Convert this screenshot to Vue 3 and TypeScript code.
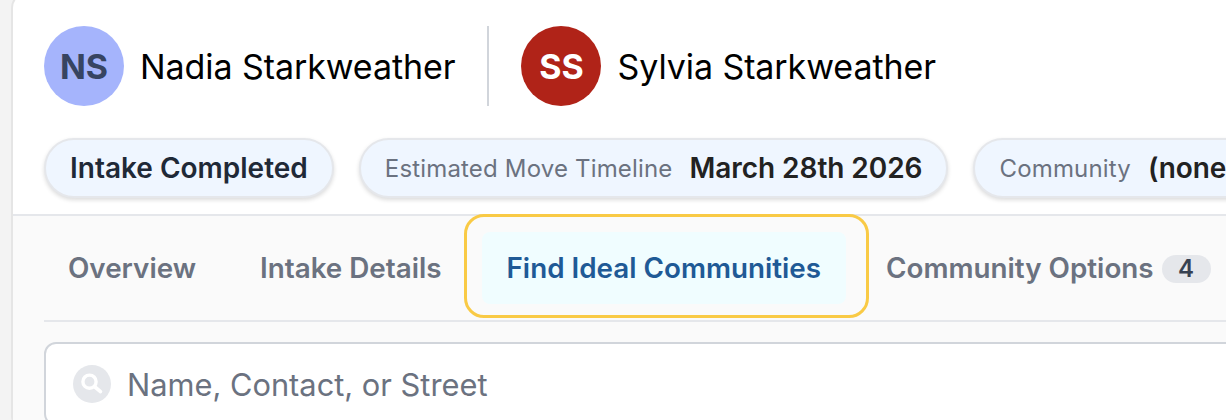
<script setup lang="ts">
type Person = { initials: string; name: string; tone: string }
type Tab = { label: string; count?: number; active?: boolean }

const people: Person[] = [
  { initials: 'NS', name: 'Nadia Starkweather', tone: 'periwinkle' },
  { initials: 'SS', name: 'Sylvia Starkweather', tone: 'brick' }
]
const tabs: Tab[] = [
  { label: 'Overview' },
  { label: 'Intake Details' },
  { label: 'Find Ideal Communities', active: true },
  { label: 'Community Options', count: 4 }
]
</script>

<template>
  <div class="page">
    <section class="card">
      <header class="head">
        <div class="people">
          <div v-for="p in people" :key="p.initials" class="person">
            <span class="avatar" :class="p.tone">{{ p.initials }}</span>
            <span class="name">{{ p.name }}</span>
          </div>
        </div>
        <div class="pills">
          <span class="pill"><b class="status">Intake Completed</b></span>
          <span class="pill">
            <span class="label">Estimated Move Timeline</span>
            <b class="value">March 28th 2026</b>
          </span>
          <span class="pill">
            <span class="label">Community</span>
            <b class="value">(none)</b>
          </span>
        </div>
      </header>
      <div class="body">
        <nav class="tabs">
          <div v-for="t in tabs" :key="t.label" class="tab" :class="{ active: t.active }">
            <span class="tab-inner">
              {{ t.label }}
              <span v-if="t.count" class="count">{{ t.count }}</span>
            </span>
          </div>
        </nav>
        <div class="search">
          <span class="search-icon">
            <svg width="38" height="38" viewBox="0 0 38 38">
              <circle cx="19" cy="19" r="19" fill="#e5e7eb" />
              <circle cx="16.5" cy="16.7" r="6.6" fill="none" stroke="#fff" stroke-width="3.4" />
              <path d="M22 22l5.5 4.6" stroke="#fff" stroke-width="3.6" stroke-linecap="round" />
            </svg>
          </span>
          <span class="placeholder">Name, Contact, or Street</span>
        </div>
      </div>
    </section>
  </div>
</template>

<style>
html,
body {
  margin: 0;
  background: #f3f3f3;
  overflow: hidden;
}
</style>

<style scoped>
.page {
  height: 420px;
  padding-left: 11px;
  overflow: hidden;
  font-family: Inter, 'Liberation Sans', sans-serif;
}
.card {
  width: 1300px;
  height: 440px;
  margin-top: -8px;
  background: #fff;
  border: 2px solid #e5e5e5;
  border-radius: 16px;
  box-sizing: border-box;
}
.head {
  padding: 32px 0 16px 31px;
}
.people {
  display: flex;
  align-items: center;
}
.person {
  display: flex;
  align-items: center;
  gap: 16px;
  height: 80px;
}
.person + .person {
  margin-left: 32px;
  padding-left: 32px;
  border-left: 2px solid #d1d5db;
}
.avatar {
  width: 80px;
  height: 80px;
  border-radius: 50%;
  display: flex;
  align-items: center;
  justify-content: center;
  font-size: 34px;
  font-weight: 700;
  flex: none;
}
.periwinkle {
  background: #a5b4fc;
  color: #374462;
}
.brick {
  background: #b02318;
  color: #fff;
}
.name {
  font-size: 34px;
  letter-spacing: -0.08px;
  color: #000;
  white-space: nowrap;
}
.pills {
  display: flex;
  gap: 25px;
  margin-top: 32px;
  white-space: nowrap;
}
.pill {
  height: 60px;
  box-sizing: border-box;
  display: flex;
  align-items: center;
  gap: 17px;
  padding: 0 24px;
  background: #eff6ff;
  border: 2px solid #e5e7eb;
  border-radius: 30px;
  box-shadow: 0 2px 4px rgba(0, 0, 0, 0.14);
  flex: none;
}
.status {
  font-size: 28px;
  font-weight: 600;
  color: #1f2937;
}
.label {
  font-size: 24px;
  letter-spacing: 0.17px;
  color: #6b7280;
}
.value {
  font-size: 28px;
  letter-spacing: -0.05px;
  font-weight: 600;
  color: #222;
}
.body {
  background: #fafafa;
  border-top: 2px solid #e5e7eb;
  padding: 0 0 0 31px;
  height: 240px;
}
.tabs {
  display: flex;
  align-items: stretch;
  height: 106px;
  box-sizing: border-box;
  border-bottom: 2px solid #e5e7eb;
  white-space: nowrap;
}
.tab {
  display: flex;
  align-items: center;
  padding: 0 24px;
  font-size: 27.8px;
  font-weight: 600;
  color: #6b7280;
}
.tab + .tab {
  margin-left: 16px;
}
.tab.active {
  color: #1f5a96;
  padding: 15px 20px 11px 15px;
  margin: -2px -7px 0 -2px;
  border: 3px solid #f9ca45;
  border-radius: 20px;
  box-sizing: border-box;
  height: 104px;
}
.tab.active + .tab {
  margin-left: 0;
}
.tab.active .tab-inner {
  display: flex;
  align-items: center;
  height: 100%;
  padding: 0 25px;
  background: #f0fdff;
  border-radius: 8px;
}
.count {
  display: inline-block;
  min-width: 49px;
  padding: 0 8px;
  box-sizing: border-box;
  margin-left: 1px;
  background: #e5e7eb;
  border-radius: 14px;
  color: #374151;
  font-size: 24px;
  line-height: 28px;
  text-align: center;
  vertical-align: 1px;
}
.search {
  display: flex;
  align-items: center;
  gap: 16px;
  height: 84px;
  width: 1300px;
  margin-top: 20px;
  padding-left: 27px;
  box-sizing: border-box;
  background: #fff;
  border: 2px solid #d1d5db;
  border-radius: 12px;
}
.search-icon {
  display: flex;
  flex: none;
}
.placeholder {
  font-size: 30.8px;
  color: #6b7280;
}
</style>
